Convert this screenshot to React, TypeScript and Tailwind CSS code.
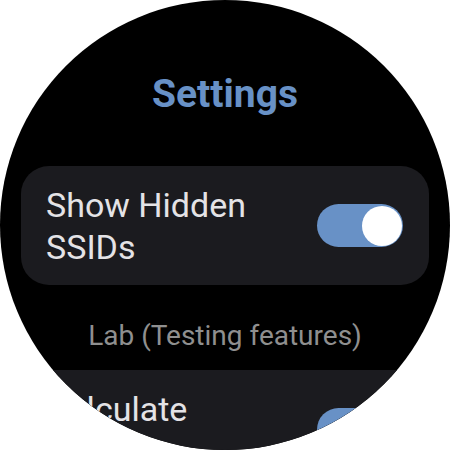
import React from "react";

function Toggle() {
  return (
    <div className="relative w-[86px] h-[43px] shrink-0 rounded-full bg-[#6891c6]">
      <div className="absolute right-[1px] top-[1.5px] w-[40px] h-[40px] rounded-full bg-white" />
    </div>
  );
}

function Row({ label }: { label: string }) {
  return (
    <div className="mx-[21px] h-[119px] shrink-0 rounded-[28px] bg-[#1b1b1f] flex items-center pl-[25px] pr-[26px] gap-[16px]">
      <div className="flex-1 text-[34px] leading-[42px] text-[#e4e3e6]">{label}</div>
      <Toggle />
    </div>
  );
}

export default function App() {
  return (
    <div className="w-[450px] h-[450px] bg-white" style={{ fontFamily: "Roboto, 'Noto Sans', sans-serif" }}>
      <div className="w-[450px] h-[450px] rounded-full overflow-hidden bg-black flex flex-col">
        <div className="pt-[71px] text-center text-[39px] leading-[46px] font-bold text-[#6891c6]">Settings</div>
        <div className="mt-[49px]">
          <Row label="Show Hidden SSIDs" />
        </div>
        <div className="mt-[34px] text-center text-[28px] leading-[33px] text-[#8f8f8f]">Lab (Testing features)</div>
        <div className="mt-[18px]">
          <Row label="Calculate Distance" />
        </div>
      </div>
    </div>
  );
}
